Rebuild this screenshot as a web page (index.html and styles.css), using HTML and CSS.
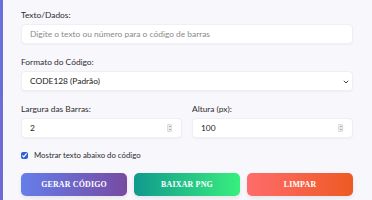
FILE: index.html
```html
<!DOCTYPE html>
<html>
  <head>
    <title>
      Gerador de Código de Barras
    </title>

    <link rel="stylesheet" href="styles.css">

  </head>

  <body>
    <div class="panel">
      <div class="field">
        <label class="field-label" for="texto">Texto/Dados:</label>
        <input class="field-input" id="texto" type="text" placeholder="Digite o texto ou número para o código de barras">
      </div>

      <div class="field">
        <label class="field-label" for="formato">Formato do Código:</label>
        <div class="input-wrap">
          <select class="field-input field-select" id="formato">
            <option>CODE128 (Padrão)</option>
            <option>EAN13</option>
            <option>UPC</option>
            <option>CODE39</option>
          </select>
          <svg class="select-arrow" width="6" height="4" viewBox="0 0 6 4">
            <path d="M0.8 0.8 L3 3 L5.2 0.8" fill="none" stroke="#444" stroke-width="1"/>
          </svg>
        </div>
      </div>

      <div class="field-row">
        <div class="field">
          <label class="field-label" for="largura">Largura das Barras:</label>
          <div class="input-wrap">
            <input class="field-input" id="largura" type="number" value="2">
            <span class="spinner"><i class="up"></i><i class="down"></i></span>
          </div>
        </div>
        <div class="field">
          <label class="field-label" for="altura">Altura (px):</label>
          <div class="input-wrap">
            <input class="field-input" id="altura" type="number" value="100">
            <span class="spinner"><i class="up"></i><i class="down"></i></span>
          </div>
        </div>
      </div>

      <label class="check-line">
        <input class="check-box" type="checkbox" checked>
        Mostrar texto abaixo do código
      </label>

      <div class="button-row">
        <button class="action-button generate">GERAR CÓDIGO</button>
        <button class="action-button download">BAIXAR PNG</button>
        <button class="action-button clear">LIMPAR</button>
      </div>
    </div>
  </body>
</html>
```

FILE: styles.css
```css
body {
  margin: 0;
  height: 200px;
  overflow: hidden;
  background: linear-gradient(180deg, #6a70dc, #6e6bd0);
  font-family: Lato, "Noto Sans", sans-serif;
  color: #333;
}

.panel {
  margin-left: 3px;
  height: 200px;
  background-color: #f7f7fc;
  padding: 9px 19px 0 18px;
  box-sizing: border-box;
}

.field {
  display: flex;
  flex-direction: column;
  margin-bottom: 12px;
}

.field-label {
  font-size: 8.4px;
  line-height: 12px;
  margin-bottom: 3px;
  color: #2e2e2e;
}

.field-input {
  height: 20px;
  box-sizing: border-box;
  border: 1px solid #eeeef4;
  border-radius: 4px;
  background-color: white;
  box-shadow: 0 1px 2px rgba(0, 0, 0, 0.04);
  padding: 0 8px;
  font-family: Lato, "Noto Sans", sans-serif;
  font-size: 8.4px;
  color: #222;
  outline: none;
  appearance: textfield;
}

.field-input::placeholder {
  color: #8a8a8a;
}

.field-input::-webkit-inner-spin-button,
.field-input::-webkit-outer-spin-button {
  -webkit-appearance: none;
  margin: 0;
}

.input-wrap {
  position: relative;
  display: flex;
  flex-direction: column;
}

.field-select {
  appearance: none;
  padding-left: 8px;
}

.select-arrow {
  position: absolute;
  right: 4px;
  top: 9px;
}

.spinner {
  position: absolute;
  right: 10px;
  top: 6px;
  width: 5px;
  height: 8px;
  background-color: #ececec;
  border: 1px solid #dcdcdc;
  border-radius: 1px;
  box-sizing: border-box;
  display: flex;
  flex-direction: column;
  align-items: center;
  justify-content: space-around;
}

.spinner i {
  width: 0;
  height: 0;
  border-left: 1px solid transparent;
  border-right: 1px solid transparent;
}

.spinner .up {
  border-bottom: 1px solid #777;
}

.spinner .down {
  border-top: 1px solid #777;
}

.field-row {
  display: grid;
  grid-template-columns: 1fr 1fr;
  gap: 10px;
}

.field-row .field {
  margin-bottom: 11px;
}

.check-line {
  display: flex;
  align-items: center;
  gap: 6px;
  font-size: 7.8px;
  line-height: 12px;
  color: #2e2e2e;
}

.check-box {
  margin: 0;
  width: 7px;
  height: 7px;
  accent-color: #2f5fd0;
}

.button-row {
  display: grid;
  grid-template-columns: 1fr 1fr 1fr;
  gap: 7px;
  margin-top: 12px;
}

.action-button {
  height: 23px;
  border: none;
  border-radius: 5px;
  color: white;
  font-family: "Liberation Serif", serif;
  font-weight: bold;
  font-size: 7.9px;
  letter-spacing: 0.2px;
  box-shadow: 0 2px 4px rgba(0, 0, 0, 0.08);
}

.generate {
  background: linear-gradient(90deg, #667eea, #764ba2);
}

.download {
  background: linear-gradient(90deg, #11998e, #38ef7d);
}

.clear {
  background: linear-gradient(90deg, #ff6b6b, #ee5a24);
}
```
